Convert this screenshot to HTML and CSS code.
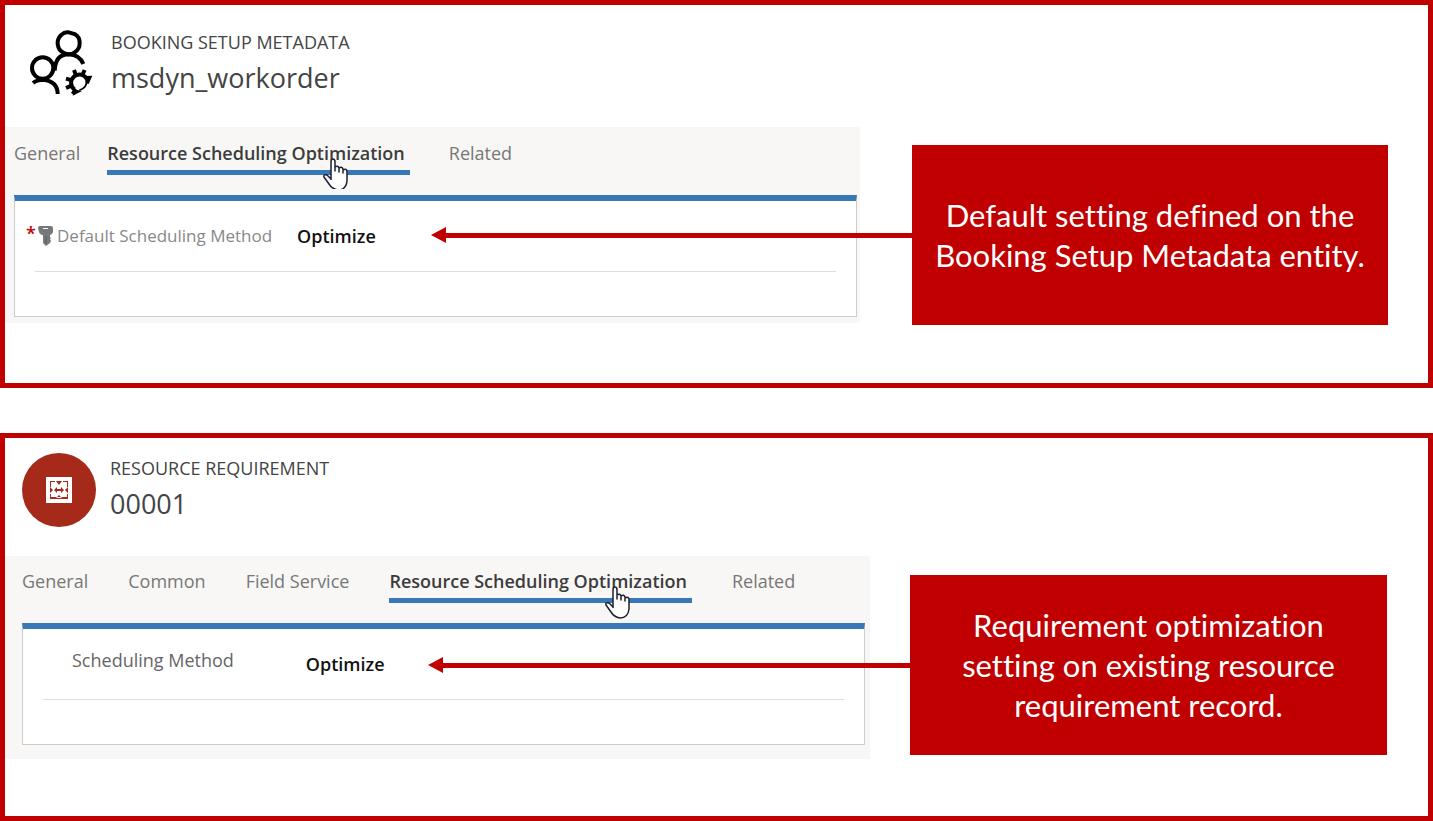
FILE: index.html
```html
<!DOCTYPE html>
<html lang="en">
<head>
<meta charset="utf-8">
<title>Default scheduling method</title>
<link rel="stylesheet" href="styles.css">
</head>
<body>
<main class="page">
  <section class="frame frame-booking">
    <article class="record">
      <header class="record-head">
        <svg class="people-icon" viewBox="27 30 192 201" aria-hidden="true">
          <g fill="none" stroke="#000" stroke-width="12">
            <path d="M146 37L164 42Q179 50 179 69A33 33 0 1 1 125 44Q134 35 146 37Z"/>
            <path d="M104 152Q106 103 146 103Q178 104 190 132"/>
            <circle cx="68" cy="144" r="32"/>
            <path d="M39 189Q50 179 70 179Q113 184 113 222"/>
            <path d="M200 176A25 25 0 1 0 164 209"/>
            <path d="M168 166L162 150M187 165L194 150M156 181L138 176M156 196L138 204M167 208L158 222" stroke-width="12"/>
            <path d="M200 180Q202 203 178 211" stroke-width="5"/>
          </g>
          <path d="M194 168L217 167L206 192L197 190ZM162 205L172 210L186 213L158 227Z"/>
        </svg>
        <div class="record-names">
          <p class="entity">BOOKING SETUP METADATA</p>
          <h1 class="record-title">msdyn_workorder</h1>
        </div>
      </header>
      <div class="form">
        <nav class="tabs">
          <button class="tab" type="button">General</button>
          <button class="tab tab-selected" type="button">Resource Scheduling Optimization
            <svg class="cursor" viewBox="0 0 26 31" aria-hidden="true"><path d="M8 22V4Q8 1 10 1Q12 1 12 4V13V9Q15 7 16 10V14V10Q19 8 20 11V15V12Q24 10 24 14V23Q23 32 15 32Q9 31 6 26L1 19Q0 16 4 17L8 21" fill="#fff" stroke="#1d2030" stroke-width="1.5" stroke-linejoin="round"/></svg>
          </button>
          <button class="tab" type="button">Related</button>
        </nav>
        <div class="panel">
          <div class="field">
            <span class="required">*</span>
            <svg class="key-icon" viewBox="0 0 16 20" aria-hidden="true"><path d="M2 0H13Q15 0 15 2V6Q14 9 12 9V11L13 12L12 13L13 15L12 17L8 20L5 17V9Q2 9 1 6L0 2Q0 0 2 0ZM5 2V3H10V2Z" fill="#77787a" fill-rule="evenodd"/><path d="M8 10V18" stroke="#5c5d60"/></svg>
            <span class="field-label">Default Scheduling Method</span>
            <strong class="field-value">Optimize</strong>
          </div>
        </div>
      </div>
    </article>
    <aside class="callout">
      <svg class="arrow-head" viewBox="0 0 15 16" aria-hidden="true"><path d="M0 8L15 0V16Z" fill="#c00000"/></svg>
      <p class="callout-text">Default setting defined on the<br>Booking Setup Metadata entity.</p>
    </aside>
  </section>

  <section class="frame frame-requirement">
    <article class="record">
      <header class="record-head">
        <span class="badge">
          <svg class="badge-icon" viewBox="0 0 26 26" aria-hidden="true">
            <path d="M0 0H26V26H0Z" fill="#fff"/>
            <path d="M4 10V4H9V5H5V10ZM17 4H22V10H21V5H17ZM4 17V22H22V17H21V20H5V17ZM10 4H16L13 8ZM10 21L13 18L16 21ZM4 10L7 13L4 16ZM22 10L19 13L22 16ZM8 13L11 10V12H15V10L18 13L15 16V14H11V16Z" fill="#a52a1a"/>
          </svg>
        </span>
        <div class="record-names">
          <p class="entity">RESOURCE REQUIREMENT</p>
          <h1 class="record-title">00001</h1>
        </div>
      </header>
      <div class="form">
        <nav class="tabs">
          <button class="tab" type="button">General</button>
          <button class="tab" type="button">Common</button>
          <button class="tab" type="button">Field Service</button>
          <button class="tab tab-selected" type="button">Resource Scheduling Optimization
            <svg class="cursor" viewBox="0 0 26 33" aria-hidden="true"><path d="M8 22V4Q8 1 10 1Q12 1 12 4V13V9Q15 7 16 10V14V10Q19 8 20 11V15V12Q24 10 24 14V23Q23 32 15 32Q9 31 6 26L1 19Q0 16 4 17L8 21" fill="#fff" stroke="#1d2030" stroke-width="1.5" stroke-linejoin="round"/></svg>
          </button>
          <button class="tab" type="button">Related</button>
        </nav>
        <div class="panel">
          <div class="field">
            <span class="field-label">Scheduling Method</span>
            <strong class="field-value">Optimize</strong>
          </div>
        </div>
      </div>
    </article>
    <aside class="callout">
      <svg class="arrow-head" viewBox="0 0 15 16" aria-hidden="true"><path d="M0 8L15 0V16Z" fill="#c00000"/></svg>
      <p class="callout-text">Requirement optimization<br>setting on existing resource<br>requirement record.</p>
    </aside>
  </section>
</main>
</body>
</html>
```
FILE: styles.css
```css
* { box-sizing: border-box; }

body {
  margin: 0;
  background: #fff;
  color: #444;
  font-family: "Open Sans", "Noto Sans", sans-serif;
  font-size: 18px;
  line-height: 24px;
}

p, h1 { margin: 0; }

.page {
  display: flex;
  flex-direction: column;
  gap: 45px;
}

.frame {
  display: grid;
  align-items: start;
  border: 5px solid #c00000;
}

.frame-booking {
  grid-template-columns: minmax(0, 855fr) minmax(0, 476fr);
  column-gap: 52px;
  padding: 0 40px 58px 0;
}

.frame-requirement {
  grid-template-columns: minmax(0, 865fr) minmax(0, 477fr);
  column-gap: 40px;
  padding: 0 41px 57px 0;
}

/* Record header */
.record-head {
  display: flex;
  align-items: flex-start;
}

.frame-booking .record-head {
  gap: 18px;
  height: 122px;
  padding: 25px 24px 0;
}

.frame-requirement .record-head {
  gap: 14px;
  height: 118px;
  padding: 15px 17px 0;
}

.people-icon {
  width: 64px;
  height: 67px;
}

.badge {
  display: flex;
  align-items: center;
  justify-content: center;
  width: 74px;
  height: 74px;
  border-radius: 50%;
  background: #a52a1a;
}

.badge-icon {
  width: 26px;
  height: 26px;
}

.frame-requirement .record-names { padding-top: 3px; }

.entity { font-size: 18px; }

.record-title {
  padding-top: 6px;
  font-size: 27px;
  font-weight: 400;
  line-height: 36px;
}

/* Form */
.form { background: #f8f7f6; }

.frame-booking .form { padding: 14px 3px 6px 9px; }

.frame-requirement .form { padding: 13px 5px 14px 17px; }

.tabs {
  display: flex;
  gap: 39px;
  padding-bottom: 20px;
}

.frame-requirement .tabs { gap: 40px; }

.frame-booking .tab:first-child { margin-right: -12px; }

.tab {
  padding: 0 0 5px;
  border: 0;
  border-bottom: 5px solid transparent;
  background: none;
  color: #777;
  font: inherit;
  white-space: nowrap;
}

.tab-selected {
  position: relative;
  padding-right: 5px;
  border-bottom-color: #3878b8;
  color: #3c3c3c;
  font-weight: 600;
}

.cursor {
  position: absolute;
  top: 17px;
  right: 61px;
  width: 26px;
}

.panel {
  padding: 0 20px 44px;
  border: 1px solid #ccc;
  border-top: 6px solid #3878b8;
  background: #fff;
}

.field {
  position: relative;
  display: flex;
  align-items: center;
  height: 71px;
  border-bottom: 1px solid #ddd;
}

.required {
  position: absolute;
  top: 20px;
  left: -9px;
  color: #c00000;
  font-weight: 600;
}

.key-icon {
  width: 16px;
  height: 20px;
  margin: 0 3px;
}

.field-label { color: #888; }

.frame-booking .field-label { font-size: 17px; }

.field-value {
  color: #111;
  font-weight: 600;
}

.frame-booking .field-value { margin-left: 25px; }

.frame-requirement .field-label {
  padding: 0 0 8px 29px;
  color: #666;
}

.frame-requirement .field-value { margin-left: 72px; }

/* Callout */
.callout {
  position: relative;
  display: flex;
  align-items: center;
  justify-content: center;
  min-height: 180px;
  background: #c00000;
  color: #fff;
  font-family: Lato, sans-serif;
  font-size: 31px;
  font-variant-ligatures: none;
  line-height: 40px;
  text-align: center;
}

.frame-booking .callout { margin-top: 140px; }

.frame-requirement .callout { margin-top: 137px; }

.callout::before {
  content: "";
  position: absolute;
  top: 50%;
  right: 100%;
  width: 98%;
  height: 5px;
  margin-top: -2px;
  background: #c00000;
}

.arrow-head {
  position: absolute;
  top: 50%;
  right: 198%;
  width: 15px;
  height: 16px;
  margin-top: -8px;
}
```
